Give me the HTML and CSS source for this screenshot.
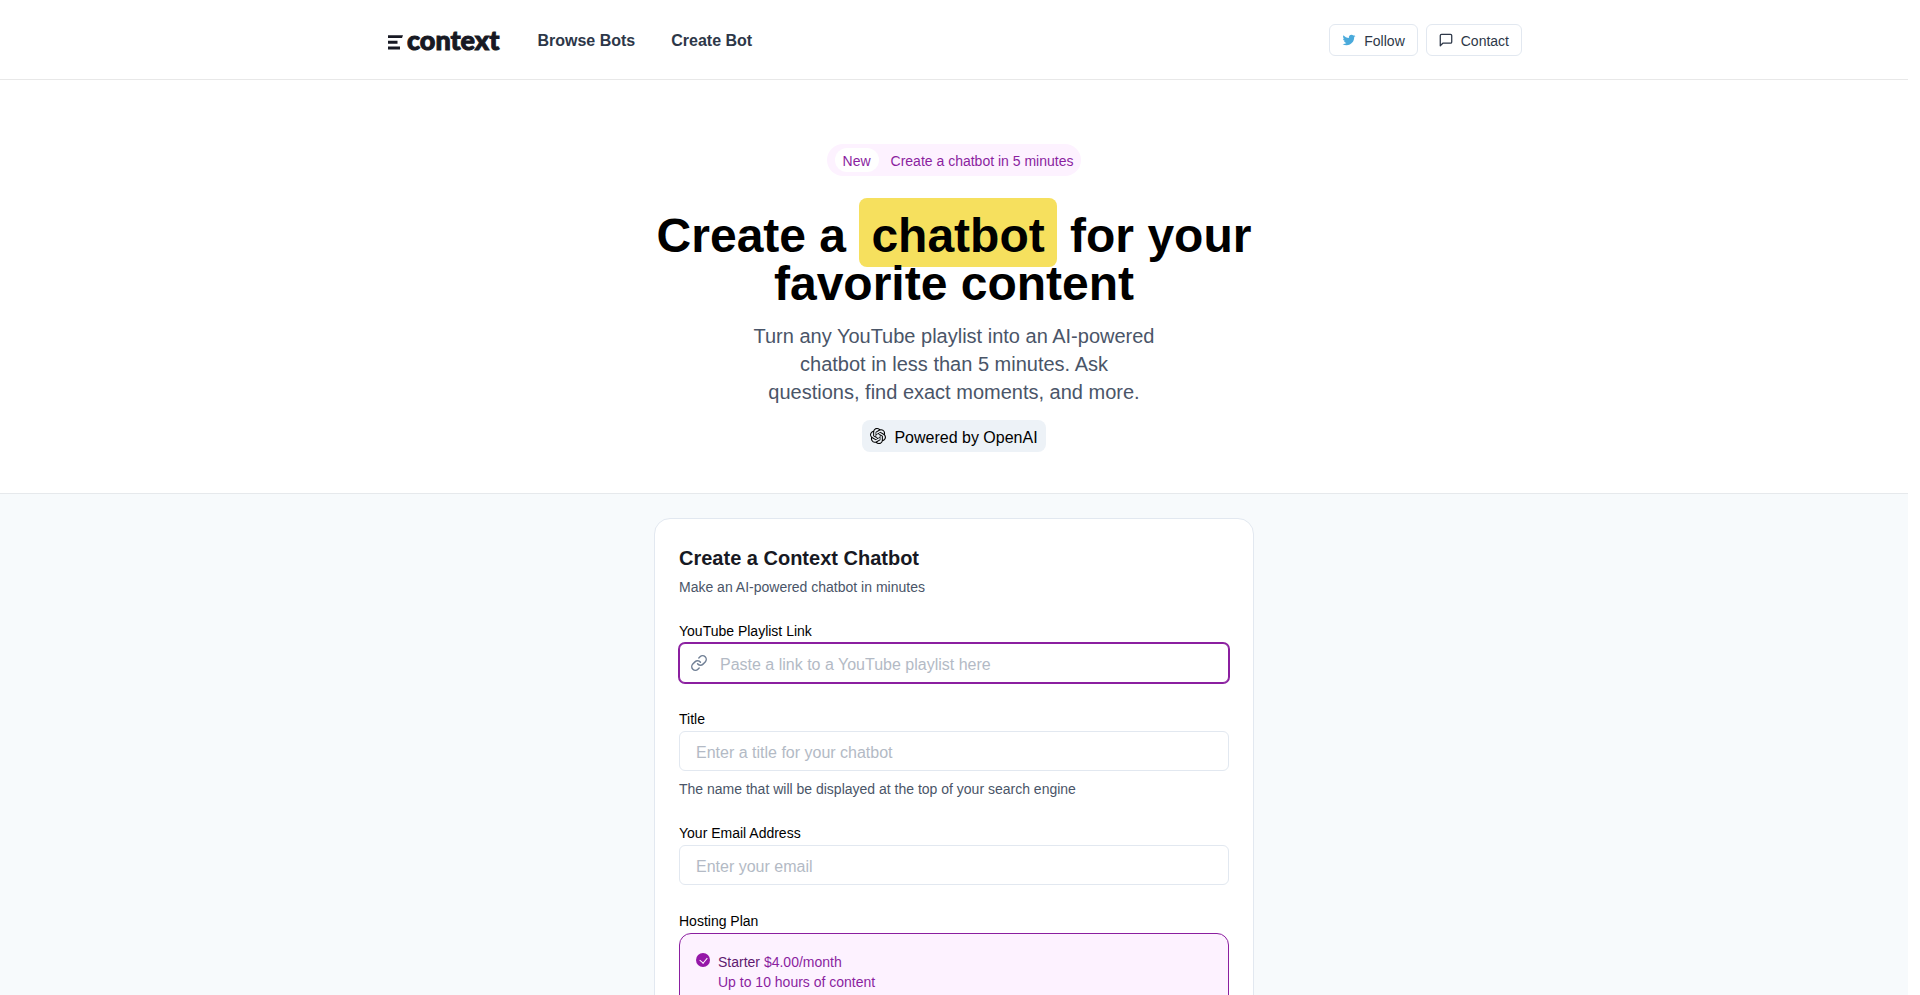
FILE: index.html
```html
<!DOCTYPE html>
<html lang="en">
<head>
<meta charset="utf-8">
<meta name="viewport" content="width=device-width, initial-scale=1">
<title>Context</title>
<link rel="stylesheet" href="styles.css">
</head>
<body>
<header class="site-header">
  <div class="container">
    <a class="logo" href="#">
      <svg class="logo-mark" viewBox="0 0 15 15" aria-hidden="true"><path d="M0 .2h15l-1 2.800H0zM0 5.800h9.500v3H0zM0 11.500h12v3H0z"/></svg>
      <span>context</span>
    </a>
    <nav class="nav">
      <a href="#">Browse Bots</a>
      <a href="#">Create Bot</a>
    </nav>
    <div class="actions">
      <button class="button" type="button">
        <svg class="icon-twitter" viewBox="-1 -1 26 26" aria-hidden="true"><path d="M24 4.557c-.883.392-1.832.656-2.828.775 1.017-.609 1.798-1.574 2.165-2.724-.951.564-2.005.974-3.127 1.195-.897-.957-2.178-1.555-3.594-1.555-3.179 0-5.515 2.966-4.797 6.045-4.091-.205-7.719-2.165-10.148-5.144-1.290 2.213-.669 5.108 1.523 6.574-.806-.026-1.566-.247-2.229-.616-.054 2.281 1.581 4.415 3.949 4.890-.693.188-1.452.232-2.224.084.626 1.956 2.444 3.379 4.600 3.419-2.070 1.623-4.678 2.348-7.290 2.040 2.179 1.397 4.768 2.212 7.548 2.212 9.142 0 14.307-7.721 13.995-14.646.962-.695 1.797-1.562 2.457-2.549z"/></svg>
        <span>Follow</span>
      </button>
      <button class="button" type="button">
        <svg class="icon-message" viewBox="1 1 22 22" aria-hidden="true"><path d="M21 15a2 2 0 0 1-2 2H7l-4 4V5a2 2 0 0 1 2-2h14a2 2 0 0 1 2 2z"/></svg>
        <span>Contact</span>
      </button>
    </div>
  </div>
</header>
<main>
  <section class="hero">
    <div class="pill"><span class="pill-tag">New</span><span class="pill-text">Create a chatbot in 5 minutes</span></div>
    <h1 class="headline">Create a <span class="highlight">chatbot</span> for your favorite content</h1>
    <p class="lead">Turn any YouTube playlist into an AI-powered chatbot in less than 5 minutes. Ask questions, find exact moments, and more.</p>
    <div class="powered">
      <svg class="icon-openai" viewBox="0 0 24 24" aria-hidden="true"><path d="M22.282 9.821a5.985 5.985 0 0 0-.516-4.910 6.046 6.046 0 0 0-6.510-2.900A6.065 6.065 0 0 0 4.981 4.182a5.985 5.985 0 0 0-3.998 2.900 6.046 6.046 0 0 0 .743 7.097 5.980 5.980 0 0 0 .511 4.911 6.051 6.051 0 0 0 6.515 2.900A5.985 5.985 0 0 0 13.260 24a6.056 6.056 0 0 0 5.772-4.206 5.990 5.990 0 0 0 3.998-2.900 6.056 6.056 0 0 0-.748-7.073zM13.260 22.430a4.476 4.476 0 0 1-2.876-1.041l.141-.080 4.779-2.758a.795.795 0 0 0 .393-.681v-6.737l2.020 1.169a.071.071 0 0 1 .038.052v5.583a4.504 4.504 0 0 1-4.495 4.493zM3.600 18.304a4.471 4.471 0 0 1-.535-3.014l.142.085 4.783 2.758a.771.771 0 0 0 .781 0l5.843-3.368v2.332a.080.080 0 0 1-.033.062L9.740 19.950a4.500 4.500 0 0 1-6.140-1.646zM2.341 7.896a4.485 4.485 0 0 1 2.366-1.973V11.600a.766.766 0 0 0 .388.676l5.815 3.355-2.020 1.168a.076.076 0 0 1-.071 0l-4.830-2.786A4.504 4.504 0 0 1 2.341 7.872zm16.596 3.856l-5.833-3.388L15.119 7.200a.076.076 0 0 1 .071 0l4.830 2.791a4.494 4.494 0 0 1-.676 8.105v-5.678a.790.790 0 0 0-.407-.666zm2.011-3.024l-.142-.085-4.774-2.782a.776.776 0 0 0-.785 0L9.409 9.230V6.897a.066.066 0 0 1 .028-.061l4.830-2.787a4.499 4.499 0 0 1 6.681 4.660zM8.307 12.863l-2.020-1.164a.080.080 0 0 1-.038-.057V6.075a4.499 4.499 0 0 1 7.375-3.453l-.142.080L8.704 5.460a.795.795 0 0 0-.393.681zm1.098-2.366l2.602-1.500 2.607 1.500v2.999l-2.597 1.500-2.607-1.500z"/></svg>
      <span class="powered-text">Powered by OpenAI</span>
    </div>
  </section>
  <section class="create">
    <form class="card">
      <h2 class="card-title">Create a Context Chatbot</h2>
      <p class="card-subtitle">Make an AI-powered chatbot in minutes</p>
      <div class="field">
        <label for="playlist">YouTube Playlist Link</label>
        <div class="control">
          <svg class="icon-link" viewBox="1 1 22 22" aria-hidden="true"><path d="M10 13a5 5 0 0 0 7.540.540l3-3a5 5 0 0 0-7.070-7.070l-1.720 1.710M14 11a5 5 0 0 0-7.540-.540l-3 3a5 5 0 0 0 7.070 7.070l1.710-1.710"/></svg>
          <input class="input with-icon" id="playlist" type="url" placeholder="Paste a link to a YouTube playlist here">
        </div>
      </div>
      <div class="field">
        <label for="title">Title</label>
        <div class="control"><input class="input" id="title" type="text" placeholder="Enter a title for your chatbot" aria-describedby="title-help"></div>
        <p class="help" id="title-help">The name that will be displayed at the top of your search engine</p>
      </div>
      <div class="field">
        <label for="email">Your Email Address</label>
        <div class="control"><input class="input" id="email" type="email" placeholder="Enter your email"></div>
      </div>
      <fieldset class="field">
        <legend>Hosting Plan</legend>
        <label class="plan">
          <input class="plan-radio" type="radio" name="plan" checked>
          <span class="plan-text"><span><span class="plan-name">Starter</span> $4.00/month</span><span>Up to 10 hours of content</span></span>
        </label>
      </fieldset>
    </form>
  </section>
</main>
</body>
</html>
```
FILE: styles.css
```css
* { box-sizing: border-box; }
html { background: #fff; }
body {
  margin: 0;
  padding-right: 12px;
  height: 100vh;
  overflow: hidden;
  font-family: "Liberation Sans", Arial, sans-serif;
  font-size: 16px;
  line-height: 24px;
  color: #000;
}
h1, h2, p, fieldset { margin: 0; }
a { color: inherit; text-decoration: none; }
svg { display: block; flex: none; }

.site-header { border-bottom: 1px solid #e8e8e8; }
.container {
  display: flex;
  align-items: center;
  max-width: 1200px;
  margin: 0 auto;
  padding: 24px 32px 23px;
}
.logo {
  display: flex;
  align-items: center;
  gap: 4px;
  padding-left: 2px;
  font: 900 27px/32px Lato, sans-serif;
  color: #171923;
  -webkit-text-stroke: 1px #171923;
}
.logo-mark { width: 15px; height: 15px; margin-top: 5px; fill: currentColor; stroke: none; }
.nav {
  display: flex;
  gap: 36px;
  margin-left: 38px;
  padding-top: 2px;
  font-weight: 600;
  color: #2d3748;
}
.actions { display: flex; gap: 8px; margin-left: auto; }
.button {
  display: flex;
  align-items: center;
  gap: 8px;
  height: 32px;
  padding: 0 12px;
  border: 1px solid #e2e8f0;
  border-radius: 6px;
  background: #fff;
  font: 14px/20px "Liberation Sans", Arial, sans-serif;
  color: #2d3748;
}
.button span { padding-top: 2px; }
.icon-twitter { width: 14px; height: 14px; fill: #4aaadb; }
.icon-message { width: 14px; height: 14px; fill: none; stroke: #2d3748; stroke-width: 2; stroke-linejoin: round; }

.hero {
  display: flex;
  flex-direction: column;
  align-items: center;
  padding: 64px 24px 40px;
  border-bottom: 1px solid #e6e9ec;
  text-align: center;
}
.pill {
  display: flex;
  align-items: center;
  gap: 12px;
  padding: 4px 8px;
  border-radius: 16px;
  background: #fdf2ff;
  font-size: 14px;
  color: #8b1fa0;
}
.pill-tag { padding: 3px 8px 0; border-radius: 12px; background: #fff; line-height: 21px; }
.pill-text { padding-top: 3px; line-height: 21px; }
.headline {
  max-width: 640px;
  margin-top: 36px;
  font-size: 48px;
  line-height: 48px;
  font-weight: 700;
}
.highlight { padding: 11px 12px 5px; border-radius: 8px; background: #f6e05e; }
.lead {
  max-width: 403px;
  margin-top: 14px;
  font-size: 20px;
  line-height: 28px;
  color: #4a5568;
}
.powered {
  display: flex;
  align-items: center;
  gap: 8px;
  margin-top: 14px;
  margin-bottom: 1px;
  padding: 4px 8px;
  border-radius: 8px;
  background: #edf2f7;
}
.powered-text { padding-top: 3px; line-height: 21px; }
.icon-openai { width: 16px; height: 16px; }

.create { padding: 24px; background: #f7fafc; }
.card {
  max-width: 600px;
  margin: 0 auto;
  padding: 24px;
  border: 1px solid #e2e8f0;
  border-radius: 16px;
  background: #fff;
  font-size: 14px;
  line-height: 20px;
}
.card-title { font-size: 20px; line-height: 30px; color: #171923; }
.card-subtitle { margin-top: 4px; color: #4a5568; }
.field { margin-top: 24px; padding: 0; border: 0; }
.field label, .field legend { display: block; padding: 0; }
.control { position: relative; padding: 2px 0; }
.input {
  display: block;
  width: 100%;
  height: 40px;
  padding: 3px 16px 0;
  border: 1px solid #e2e8f0;
  border-radius: 6px;
  background: #fff;
  font: 16px/24px "Liberation Sans", Arial, sans-serif;
  color: #000;
}
.input::placeholder { color: #b3bac5; opacity: 1; }
.with-icon {
  padding-left: 40px;
  border-color: #8b1fa0;
  box-shadow: 0 0 0 1px #8b1fa0;
  outline: none;
}
.icon-link {
  position: absolute;
  top: 14px;
  left: 12px;
  width: 16px;
  height: 16px;
  fill: none;
  stroke: #718096;
  stroke-width: 2;
  stroke-linecap: round;
}
.help { margin-top: 6px; color: #4a5568; }
.field .plan {
  display: flex;
  align-items: flex-start;
  gap: 8px;
  margin-top: 2px;
  padding: 18px 16px;
  border: 1px solid #8b1fa0;
  border-radius: 12px;
  background: #fdf2ff;
  color: #8b1fa0;
}
.plan-radio {
  appearance: none;
  width: 14px;
  height: 14px;
  margin: 1px 0 0;
  border-radius: 50%;
  background: #9517a8;
  position: relative;
}
.plan-radio::after {
  content: "";
  position: absolute;
  left: 4px;
  top: 4px;
  width: 6px;
  height: 4px;
  border: solid #fff;
  border-width: 0 0 1px 1px;
  transform: rotate(-50deg);
}
.plan-text { display: flex; flex-direction: column; }
.plan-name { color: #5f1a70; }
```
